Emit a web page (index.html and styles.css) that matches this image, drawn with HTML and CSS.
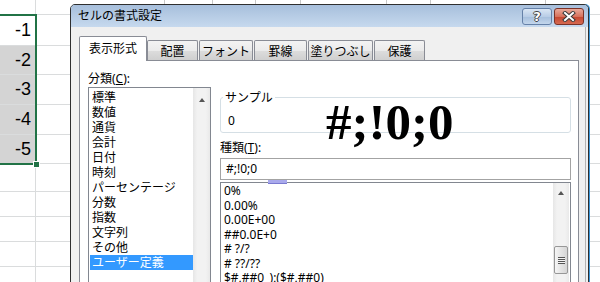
FILE: index.html
```html
<!DOCTYPE html>
<html lang="ja">
<head>
  <meta charset="UTF-8">
  <title>セルの書式設定</title>
  <link rel="stylesheet" href="styles.css">
</head>
<body>

<div class="sheet">
  <div class="cell a"></div>
  <div class="cell b">
    <div class="marks">
      <span style="width:129px"></span><span style="width:48px"></span><span style="width:43px"></span>
      <span style="width:45px"></span><span style="width:86px"></span><span style="width:44px"></span>
      <span style="width:115px"></span>
    </div>
  </div>
  <div class="cell a">-1</div><div class="cell b"></div>
  <div class="cell a sel">-2</div><div class="cell b"></div>
  <div class="cell a sel">-3</div><div class="cell b"></div>
  <div class="cell a sel">-4</div><div class="cell b"></div>
  <div class="cell a sel">-5</div><div class="cell b"></div>
  <div class="cell a"></div><div class="cell b"></div>
  <div class="cell a"></div><div class="cell b"></div>
  <div class="cell a"></div><div class="cell b"></div>
  <div class="cell a"></div><div class="cell b"></div>
  <div class="cell a"></div><div class="cell b"></div>
</div>
<div class="selection"></div>
<div class="fill-handle"></div>

<div class="dialog">
  <div class="titlebar">
    <span class="title">セルの書式設定</span>
    <div class="caption-btns">
      <div class="cbtn help"><span class="q">?</span></div>
      <div class="cbtn close">
        <svg width="14" height="11" viewBox="0 0 14 11">
          <path d="M3 2 L11 9 M11 2 L3 9" stroke="#3a3a3a" stroke-width="4" stroke-linecap="square"/>
          <path d="M3 2 L11 9 M11 2 L3 9" stroke="#fff" stroke-width="2" stroke-linecap="square"/>
        </svg>
      </div>
    </div>
  </div>

  <div class="dlg-body">
    <div class="tabs">
      <div class="tab active">表示形式</div>
      <div class="tab w51 first">配置</div>
      <div class="tab w54">フォント</div>
      <div class="tab w53">罫線</div>
      <div class="tab w65">塗りつぶし</div>
      <div class="tab w51">保護</div>
    </div>

    <div class="panel">
      <div class="col-left">
        <div class="lbl">分類(<u>C</u>):</div>
        <div class="listbox cat">
          <ul>
            <li>標準</li>
            <li>数値</li>
            <li>通貨</li>
            <li>会計</li>
            <li>日付</li>
            <li>時刻</li>
            <li>パーセンテージ</li>
            <li>分数</li>
            <li>指数</li>
            <li>文字列</li>
            <li>その他</li>
            <li class="sel">ユーザー定義</li>
          </ul>
          <div class="vscroll cat-scroll"><div class="arrow-up"></div></div>
        </div>
      </div>

      <div class="col-right">
        <fieldset class="sample">
          <legend>サンプル</legend>
          <div class="sample-val">0</div>
        </fieldset>
        <div class="lbl kind">種類(<u>T</u>):</div>
        <div class="input">#;!0;0</div>
        <div class="listbox fmt">
          <ul>
            <li>0%</li>
            <li>0.00%</li>
            <li>0.00E+00</li>
            <li>##0.0E+0</li>
            <li># ?/?</li>
            <li># ??/??</li>
            <li>$#,##0_);($#,##0)</li>
            <li>$#,##0_);[赤]($#,##0)</li>
          </ul>
          <div class="vscroll fmt-scroll">
            <div class="arrow-up"></div>
            <div class="thumb"><div class="grip"></div></div>
          </div>
        </div>
      </div>
    </div>
  </div>
</div>

<div class="big">#;!0;0</div>
<div class="ime-mark"></div>

</body>
</html>
```

FILE: styles.css
```css
body {
  margin: 0;
  width: 600px;
  height: 282px;
  overflow: hidden;
  position: relative;
  background: #fff;
  font-family: "Noto Sans", "Noto Sans CJK JP", sans-serif;
  font-size: 12px;
  color: #000;
}

/* spreadsheet behind the dialog */
.sheet {
  display: grid;
  grid-template-columns: 36px 1fr;
  grid-template-rows: 15px 31px 29px 30px 30px 29px 28px 25px 25px 25px 25px;
}

.cell {
  box-sizing: border-box;
  border-bottom: 1px solid #dadcdd;
}

.cell.a {
  border-right: 1px solid #dadcdd;
  display: flex;
  align-items: center;
  justify-content: flex-end;
  padding-right: 4px;
  font-family: "Liberation Sans", Arial, sans-serif;
  font-size: 18px;
}

.cell.sel {
  background: #d4d4d4;
}

.marks {
  display: flex;
  height: 100%;
}

.marks span {
  box-sizing: border-box;
  border-right: 1px solid #c8c8c8;
}

.selection {
  position: absolute;
  left: -3px;
  top: 14px;
  width: 40px;
  height: 151px;
  box-sizing: border-box;
  border: 2px solid #217346;
}

.fill-handle {
  position: absolute;
  left: 33px;
  top: 161px;
  width: 5px;
  height: 5px;
  background: #217346;
  border: 1px solid #fff;
}

/* dialog window */
.dialog {
  position: absolute;
  left: 70px;
  top: 4px;
  width: 519px;
  height: 300px;
  box-sizing: border-box;
  border: 1px solid #2f2f2f;
  border-radius: 5px 5px 0 0;
  background: #f0f0f0;
  box-shadow: 1px 0 0 #3a96d8;
  overflow: hidden;
}

.titlebar {
  height: 22px;
  display: flex;
  justify-content: space-between;
  background: linear-gradient(#a7bfdc, #c6d9ee);
}

.title {
  padding-left: 7px;
  line-height: 21px;
}

.caption-btns {
  display: flex;
  gap: 2px;
  padding: 3px 4px 0 0;
}

.cbtn {
  width: 30px;
  height: 17px;
  box-sizing: border-box;
  border-radius: 3px;
  display: flex;
  align-items: center;
  justify-content: center;
}

.cbtn.help {
  border: 1px solid #6581a8;
  background: linear-gradient(#dae6f4, #b9cde6 50%, #a5bedc 51%, #c3d6ec);
}

.cbtn.help .q {
  font-family: "DejaVu Sans", sans-serif;
  font-weight: bold;
  font-size: 13px;
  line-height: 13px;
  color: #fff;
  text-shadow: 1px 0 0 #444, -1px 0 0 #444, 0 1px 0 #444, 0 -1px 0 #444;
}

.cbtn.close {
  border: 1px solid #7b3227;
  background: linear-gradient(#e9a99a, #d7725d 50%, #c4452f 51%, #d66a51);
}

.dlg-body {
  padding: 9px 6px 0 8px;
  margin-right: 2px;
  border-right: 1px solid #b4b4b4;
  height: 270px;
}

.tabs {
  display: flex;
  align-items: flex-end;
  height: 24px;
  position: relative;
  z-index: 1;
}

.tab {
  height: 20px;
  box-sizing: border-box;
  border: 1px solid #898c95;
  border-bottom: none;
  border-radius: 2px 2px 0 0;
  margin-left: 1px;
  padding-top: 2px;
  line-height: 17px;
  text-align: center;
  background: linear-gradient(#f3f3f3, #ebebeb 50%, #dddddd 50%, #cfcfcf);
}

.tab.active {
  width: 68px;
  height: 25px;
  margin: 0 0 -1px 0;
  padding-top: 1px;
  line-height: 22px;
  background: #fff;
}

.tab.first { margin-left: 0; }
.w51 { width: 51px; }
.w53 { width: 53px; }
.w54 { width: 54px; }
.w65 { width: 65px; }

.panel {
  display: flex;
  height: 230px;
  border: 1px solid #898c95;
  background: #fff;
  padding: 10px 7px 0 8px;
}

.lbl {
  line-height: 15px;
}

.col-left {
  width: 123px;
  flex: none;
}

.col-right {
  width: 351px;
  flex: none;
  margin-left: 9px;
}

.listbox {
  display: flex;
  box-sizing: border-box;
  border: 1px solid #828790;
  background: #fff;
}

.listbox ul {
  flex: 1;
  list-style: none;
  margin: 0;
}

.listbox.cat {
  margin-top: 1px;
  height: 200px;
}

.listbox.cat ul {
  padding: 2px 0 0 1px;
}

.listbox.cat li {
  line-height: 15px;
  padding-left: 2px;
  white-space: nowrap;
}

.listbox.cat li.sel {
  background: #3399ff;
  color: #fff;
}

.vscroll {
  width: 17px;
  flex: none;
  display: flex;
  flex-direction: column;
  align-items: center;
  background: linear-gradient(90deg, #e6e6e6, #f2f2f2 25%, #f2f2f2 75%, #e9e9e9);
}

.arrow-up {
  width: 0;
  height: 0;
  border-left: 3px solid transparent;
  border-right: 3px solid transparent;
  border-bottom: 4px solid #555;
}

.cat-scroll .arrow-up {
  margin-top: 10px;
}

.fmt-scroll {
  width: 16px;
  margin-right: 1px;
}

.fmt-scroll .arrow-up {
  margin-top: 8px;
}

.thumb {
  margin-top: 51px;
  width: 14px;
  height: 28px;
  box-sizing: border-box;
  border: 1px solid #979797;
  border-radius: 2px;
  background: linear-gradient(90deg, #f6f6f6, #e4e4e4 50%, #d6d6d6);
  display: flex;
  align-items: center;
  justify-content: center;
}

.grip {
  width: 7px;
  height: 7px;
  background: repeating-linear-gradient(#555 0 1px, #f4f4f4 1px 2px);
}

.sample {
  margin: 19px 0 0 0;
  padding: 8px 0 4px 7px;
  box-sizing: border-box;
  width: 351px;
  min-width: 0;
  border: 1px solid #d5dfe5;
  border-radius: 3px;
}

.sample legend {
  padding: 0 2px;
  margin-left: -5px;
  line-height: 15px;
}

.sample-val {
  line-height: 15px;
}

.lbl.kind {
  margin-top: 7px;
}

.input {
  margin-top: 3px;
  height: 22px;
  box-sizing: border-box;
  border: 1px solid #a3a3a3;
  padding-left: 5px;
  line-height: 20px;
}

.listbox.fmt {
  margin-top: 2px;
  height: 120px;
}

.listbox.fmt ul {
  padding: 1px 0 0 3px;
}

.listbox.fmt li {
  line-height: 14.5px;
  white-space: nowrap;
}

/* overlays */
.big {
  position: absolute;
  left: 326px;
  top: 97px;
  font-family: "Liberation Serif", "Times New Roman", serif;
  font-weight: bold;
  font-size: 51px;
  line-height: 51px;
  color: #000;
}

.ime-mark {
  position: absolute;
  left: 268px;
  top: 180px;
  width: 19px;
  height: 3px;
  background: #a9a9ec;
  border-bottom: 1px solid #7a7ad0;
}
```
